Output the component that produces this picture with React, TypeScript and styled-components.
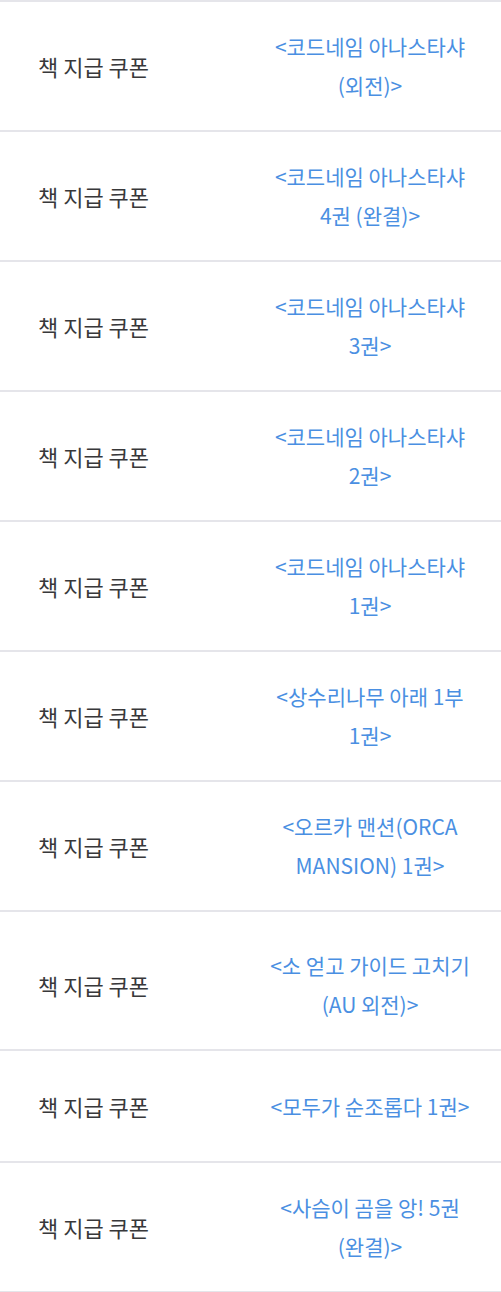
import styled, { createGlobalStyle } from "styled-components";

const GlobalStyle = createGlobalStyle`
  html, body {
    margin: 0;
    padding: 0;
    background: #ffffff;
  }
  body {
    font-family: "Noto Sans CJK KR", "Noto Sans", sans-serif;
  }
`;

type Coupon = { label: string; title: string; extraTop?: number };

// nbsp keeps "코드네임 아나스타샤" on one line like the original
const coupons: Coupon[] = [
  { label: "책 지급 쿠폰", title: "<코드네임\u00a0아나스타샤 (외전)>" },
  { label: "책 지급 쿠폰", title: "<코드네임\u00a0아나스타샤 4권 (완결)>" },
  { label: "책 지급 쿠폰", title: "<코드네임\u00a0아나스타샤 3권>" },
  { label: "책 지급 쿠폰", title: "<코드네임\u00a0아나스타샤 2권>" },
  { label: "책 지급 쿠폰", title: "<코드네임\u00a0아나스타샤 1권>" },
  { label: "책 지급 쿠폰", title: "<상수리나무 아래 1부 1권>" },
  { label: "책 지급 쿠폰", title: "<오르카 맨션(ORCA MANSION) 1권>" },
  { label: "책 지급 쿠폰", title: "<소 얻고 가이드 고치기 (AU 외전)>", extraTop: 9 },
  { label: "책 지급 쿠폰", title: "<모두가 순조롭다 1권>" },
  { label: "책 지급 쿠폰", title: "<사슴이 곰을 앙! 5권 (완결)>" },
];

export default function App() {
  return (
    <>
      <GlobalStyle />
      <Table>
        {coupons.map((c, i) => (
          <Row key={i} $extraTop={c.extraTop ?? 0}>
            <Label>{c.label}</Label>
            <Title>{c.title}</Title>
          </Row>
        ))}
      </Table>
    </>
  );
}

const Table = styled.div`
  width: 501px;
  border-bottom: 2px solid #e5e5ea;
`;

const Row = styled.div<{ $extraTop: number }>`
  display: grid;
  grid-template-columns: 1fr 208px;
  align-items: center;
  min-height: 112px;
  box-sizing: border-box;
  padding: ${(p) => 25 + p.$extraTop}px 27px 25px 38px;
  border-top: 2px solid #e5e5ea;
`;

const Label = styled.span`
  font-size: 22px;
  color: #38383a;
  white-space: nowrap;
`;

const Title = styled.div`
  font-size: 21px;
  line-height: 39px;
  color: #4a8fe2;
  text-align: center;
  word-break: keep-all;
  overflow: hidden;
`;
